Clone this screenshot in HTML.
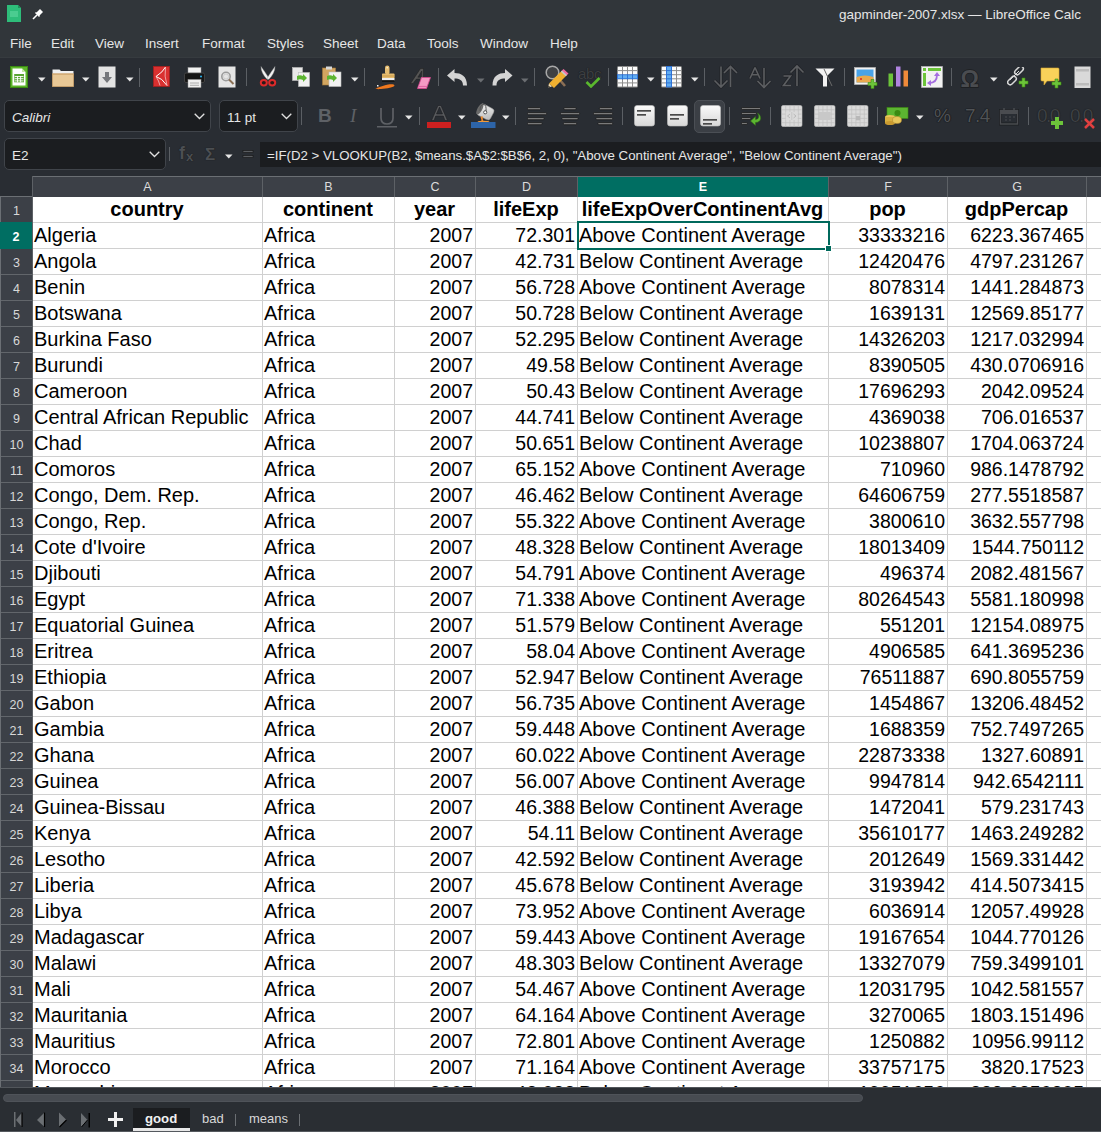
<!DOCTYPE html><html><head><meta charset="utf-8"><style>*{box-sizing:border-box}
html,body{margin:0;padding:0}
body{width:1101px;height:1132px;overflow:hidden;position:relative;background:#292d33;font-family:"Liberation Sans",sans-serif;color:#fff}
.abs{position:absolute}
#title{position:absolute;left:0;top:0;width:1101px;height:58px;background:#31363a;border-bottom:1px solid #363b3f}
#tbar{position:absolute;left:0;top:58px;width:1101px;height:118px;background:#292d33}
.ttl{position:absolute;top:5px;right:21px;font-size:15px;color:#e8e8e8;white-space:nowrap}
.menu{position:absolute;top:35px;font-size:14px;color:#eaeaea;white-space:nowrap}
.ch{position:absolute;top:177px;height:20px;background:#3c4047;color:#dcdcdc;font-size:12.5px;text-align:center;line-height:21px}
.ch.sel{background:#006e62;color:#fff;font-weight:bold}
.chv{position:absolute;top:177px;width:1px;height:20px;background:#5d6166}
#chtop{position:absolute;left:32px;top:176px;width:1069px;height:1px;background:#6b6f74}
.rh{position:absolute;left:1px;width:31px;height:25px;background:#3c4047;color:#d8d8d8;font-size:12.5px;text-align:center;line-height:29px}
.rh.sel{background:#006e62;color:#fff;font-weight:bold;left:0;width:32px;height:27px;margin-top:-1px;line-height:31px;z-index:3}
.cell{position:absolute;height:25px;background:#fff;color:#000;font-size:20px;line-height:25px;white-space:nowrap;overflow:hidden;padding:0 2px 0 1px}
.cell.r{font-size:19.5px;padding-right:2px}
.cell.l{text-align:left}
.cell.r{text-align:right}
.cell.c{text-align:center}
.cell.b{font-weight:bold}
.hl{position:absolute;left:33px;width:1068px;height:1px;background:#d0d0d0}
.vl{position:absolute;top:197px;width:1px;height:900px;background:#d0d0d0}
.rhl{position:absolute;left:1px;width:31px;height:1px;background:#62666b}
#selbox{position:absolute;left:577px;top:221px;width:253px;height:29px;border:2px solid #00695c}
#handle{position:absolute;left:825px;top:245px;width:7px;height:7px;background:#00695c;border:1px solid #fff}
#bottom{position:absolute;left:0;top:1087px;width:1101px;height:45px;background:#2a2e33}
</style></head><body>
<div id="title"></div><div id="tbar"></div>
<svg class="abs" style="left:7px;top:5px" width="15" height="18" viewBox="0 0 15 18"><path d="M0 0H11L14 3V17H0Z" fill="#2ebd7a"/><path d="M11 0L14 3H11Z" fill="#1f8f5a"/><rect x="3" y="6" width="8" height="6" fill="#5fd59f" opacity="0.6"/></svg>
<svg class="abs" style="left:32px;top:7px" width="13" height="13" viewBox="0 0 13 13"><path d="M1 12L5 8" stroke="#fff" stroke-width="1.6"/><path d="M4 6L7 9L11 5L8 2Z" fill="#fff"/><path d="M3.5 5.5L7.5 9.5" stroke="#fff" stroke-width="1.5"/></svg>
<div class="abs" style="top:6px;left:839px;font-size:13.5px;color:#e6e6e6;white-space:nowrap;line-height:18px">gapminder-2007.xlsx — LibreOffice Calc</div>
<div class="abs" style="top:35px;left:10px;font-size:13.5px;color:#e6e6e6;white-space:nowrap;line-height:18px">File</div>
<div class="abs" style="top:35px;left:51px;font-size:13.5px;color:#e6e6e6;white-space:nowrap;line-height:18px">Edit</div>
<div class="abs" style="top:35px;left:95px;font-size:13.5px;color:#e6e6e6;white-space:nowrap;line-height:18px">View</div>
<div class="abs" style="top:35px;left:145px;font-size:13.5px;color:#e6e6e6;white-space:nowrap;line-height:18px">Insert</div>
<div class="abs" style="top:35px;left:202px;font-size:13.5px;color:#e6e6e6;white-space:nowrap;line-height:18px">Format</div>
<div class="abs" style="top:35px;left:267px;font-size:13.5px;color:#e6e6e6;white-space:nowrap;line-height:18px">Styles</div>
<div class="abs" style="top:35px;left:323px;font-size:13.5px;color:#e6e6e6;white-space:nowrap;line-height:18px">Sheet</div>
<div class="abs" style="top:35px;left:377px;font-size:13.5px;color:#e6e6e6;white-space:nowrap;line-height:18px">Data</div>
<div class="abs" style="top:35px;left:427px;font-size:13.5px;color:#e6e6e6;white-space:nowrap;line-height:18px">Tools</div>
<div class="abs" style="top:35px;left:480px;font-size:13.5px;color:#e6e6e6;white-space:nowrap;line-height:18px">Window</div>
<div class="abs" style="top:35px;left:550px;font-size:13.5px;color:#e6e6e6;white-space:nowrap;line-height:18px">Help</div>
<svg class="abs" style="left:10px;top:66px" width="18" height="22" viewBox="0 0 18 22"><rect x="0.5" y="0.5" width="17" height="21" fill="#5db52a" stroke="#3a8a12"/><path d="M2.5 2.5H12L15.5 6V19.5H2.5Z" fill="#fff"/><path d="M12 2.5V6H15.5" fill="#c5e6a5"/><rect x="4.2" y="8" width="9.8" height="8.3" fill="#5aa532"/><path d="M4.7 10.5H13.5M4.7 12.7H13.5M4.7 14.9H13.5M7.5 10V16.3M10.6 10V16.3" stroke="#fff" stroke-width="0.9"/></svg>
<svg class="abs" style="left:38px;top:77px" width="8" height="5" viewBox="0 0 8 5"><path d="M0 0.5H7.5L3.75 4.5Z" fill="#e6e6e6"/></svg>
<svg class="abs" style="left:52px;top:68px" width="23" height="19" viewBox="0 0 23 19"><path d="M0.5 1.5H7.5L9 3H21.5V18.5H0.5Z" fill="#f0f0f0"/><rect x="0.5" y="6" width="21" height="12.5" fill="#e8c896"/><path d="M0.5 6H21.5" stroke="#d9b07a"/><rect x="0.5" y="6" width="21" height="12.5" fill="none" stroke="#c49a62" stroke-width="0.8"/></svg>
<svg class="abs" style="left:82px;top:77px" width="8" height="5" viewBox="0 0 8 5"><path d="M0 0.5H7.5L3.75 4.5Z" fill="#e6e6e6"/></svg>
<svg class="abs" style="left:98px;top:66px" width="18" height="22" viewBox="0 0 18 22"><rect x="0.5" y="0.5" width="17" height="21" fill="#e3e3e3"/><path d="M7 6H11V11H14L9 17L4 11H7Z" fill="#75777b"/></svg>
<svg class="abs" style="left:126px;top:77px" width="8" height="5" viewBox="0 0 8 5"><path d="M0 0.5H7.5L3.75 4.5Z" fill="#e6e6e6"/></svg>
<div class="abs" style="left:139px;top:68px;width:1px;height:19px;background:#5b5f64"></div>
<svg class="abs" style="left:153px;top:66px" width="17" height="21" viewBox="0 0 17 21"><rect x="0.4" y="0.4" width="16" height="20" fill="#d93030" stroke="#a81e1e" stroke-width="0.8"/><path d="M12.5 1Q10 6 3 10.5Q9 12 14 19.5" stroke="#fff" stroke-width="1" fill="none"/><path d="M12.5 1Q11 10 14 19.5" stroke="#f4c0c0" stroke-width="0.8" fill="none"/><path d="M3 10.5Q6 15 7 19.5" stroke="#f4c0c0" stroke-width="0.8" fill="none"/></svg>
<svg class="abs" style="left:184px;top:67px" width="21" height="21" viewBox="0 0 21 21"><rect x="4" y="0.5" width="13" height="7" fill="#f2f2f2" stroke="#999" stroke-width="0.5"/><rect x="0.5" y="6" width="20" height="9.5" rx="1.5" fill="#161616" stroke="#4a4a4a" stroke-width="0.8"/><circle cx="17" cy="9.5" r="1" fill="#29b6f6"/><rect x="4" y="12.5" width="13" height="8" fill="#f0f0f0" stroke="#999" stroke-width="0.5"/><path d="M6 16H15M6 18.3H15" stroke="#9a9a9a" stroke-width="0.8"/></svg>
<svg class="abs" style="left:218px;top:66px" width="19" height="22" viewBox="0 0 19 22"><rect x="0.5" y="0.5" width="17" height="21" fill="#e5e5e5"/><circle cx="8" cy="10.5" r="4.2" fill="none" stroke="#9b9b9b" stroke-width="1.6"/><circle cx="8" cy="10.5" r="2.5" fill="none" stroke="#c8c8c8" stroke-width="0.8"/><path d="M11 13.5L15.5 18" stroke="#8a7055" stroke-width="2"/></svg>
<div class="abs" style="left:246px;top:68px;width:1px;height:18px;background:#5b5f64"></div>
<svg class="abs" style="left:259px;top:66px" width="18" height="21" viewBox="0 0 18 21"><path d="M2 0.5Q2 7 8.2 13.5L10 12.3Q6 6 2 0.5Z" fill="#f2f2f2" stroke="#9a9a9a" stroke-width="0.4"/><path d="M16 0.5Q16 7 9.8 13.5L8 12.3Q12 6 16 0.5Z" fill="#f2f2f2" stroke="#9a9a9a" stroke-width="0.4"/><ellipse cx="4.8" cy="16.8" rx="3" ry="2.7" fill="#2a1a1a" stroke="#dd2a2a" stroke-width="2"/><ellipse cx="13.2" cy="16.8" rx="3" ry="2.7" fill="#2a1a1a" stroke="#dd2a2a" stroke-width="2"/></svg>
<svg class="abs" style="left:292px;top:67px" width="18" height="20" viewBox="0 0 18 20"><rect x="0.5" y="0.5" width="10" height="13" fill="#e8e8e8" stroke="#bdbdbd" stroke-width="0.6"/><rect x="6.5" y="5.5" width="11" height="14" fill="#f2f2f2" stroke="#bdbdbd" stroke-width="0.6"/><path d="M5 9C7 8 9 8 11 9V7L15 11L11 15V13C9 12 7 12 5 13Z" fill="#5cb531"/></svg>
<svg class="abs" style="left:322px;top:66px" width="20" height="21" viewBox="0 0 20 21"><rect x="0.5" y="2" width="13" height="17" fill="#d2a560" stroke="#a87a3a" stroke-width="0.6"/><rect x="4" y="0.5" width="6" height="3" fill="#d8d8d8"/><rect x="7" y="6" width="12" height="14.5" fill="#f2f2f2" stroke="#bdbdbd" stroke-width="0.6"/><path d="M5 10C7 9 9 9 11 10V8L15 12L11 16V14C9 13 7 13 5 14Z" fill="#5cb531"/></svg>
<svg class="abs" style="left:351px;top:77px" width="8" height="5" viewBox="0 0 8 5"><path d="M0 0.5H7.5L3.75 4.5Z" fill="#e6e6e6"/></svg>
<div class="abs" style="left:364px;top:68px;width:1px;height:18px;background:#5b5f64"></div>
<svg class="abs" style="left:375px;top:65px" width="21" height="25" viewBox="0 0 21 25"><rect x="10" y="0.5" width="4.5" height="9" rx="2.2" fill="#e6bd72"/><circle cx="12.2" cy="2.7" r="0.8" fill="#fff6d8"/><rect x="7" y="8.5" width="12.5" height="5" rx="0.8" fill="#e5bb6e"/><rect x="7" y="10.5" width="12.5" height="1" fill="#c99a48"/><rect x="7" y="13" width="12.5" height="2.5" fill="#eeeeee"/><rect x="7" y="15.2" width="12.5" height="1.8" fill="#161616"/><path d="M0.5 23.5C5 22 9 20 13 19.5C16 19 19.5 19 19.5 20.5C19 22.5 12 23.5 6 24C3 24.3 1 24.2 0.5 23.5Z" fill="#f0781e"/><rect x="2" y="20" width="1.5" height="1.5" fill="#f5f5f5"/></svg>
<svg class="abs" style="left:410px;top:68px" width="22" height="22" viewBox="0 0 22 22"><path d="M0.5 15.5L10.5 0.5H13.5L13 15.5H11L11.2 11H6.5L3 15.5ZM7.8 9.2H11.3L11.8 3Z" fill="#555" stroke="#1e1e1e" stroke-width="0.5"/><path d="M11.5 9.5L20.5 9.5L16.5 20.5H7.5Z" fill="#f49ac4" stroke="#d6458e" stroke-width="0.8"/><path d="M8 18.5H17" stroke="#e066a6" stroke-width="1.2"/></svg>
<div class="abs" style="left:438px;top:68px;width:1px;height:18px;background:#5b5f64"></div>
<svg class="abs" style="left:447px;top:69px" width="21" height="17" viewBox="0 0 21 17"><path d="M0 6.5L7.5 0V4C14 4 20 7 20 16.5H16C16 11 12 9.5 7.5 9.5V13Z" fill="#d4d4d4"/></svg>
<svg class="abs" style="left:477px;top:78px" width="8" height="5" viewBox="0 0 8 5"><path d="M0 0.5H7.5L3.75 4.5Z" fill="#6b6e72"/></svg>
<svg class="abs" style="left:492px;top:69px" width="21" height="17" viewBox="0 0 21 17"><path d="M20.5 6.5L13 0V4C6.5 4 0.5 7 0.5 16.5H4.5C4.5 11 8.5 9.5 13 9.5V13Z" fill="#d4d4d4"/></svg>
<svg class="abs" style="left:521px;top:78px" width="8" height="5" viewBox="0 0 8 5"><path d="M0 0.5H7.5L3.75 4.5Z" fill="#6b6e72"/></svg>
<div class="abs" style="left:534px;top:68px;width:1px;height:18px;background:#5b5f64"></div>
<svg class="abs" style="left:545px;top:65px" width="25" height="24" viewBox="0 0 25 24"><circle cx="7.5" cy="7.5" r="6.3" fill="#3e4043" stroke="#a8a8a8" stroke-width="1.5"/><path d="M14 14L20 21" stroke="#8a6e55" stroke-width="2.6"/><path d="M4 21.5L16.5 9L21.5 13.5L9 26Z" fill="#f0b030" transform="translate(0,-3)"/><path d="M16.5 6L18.5 4L23.5 8.5L21.5 10.5Z" fill="#f06aa0"/><path d="M15.8 6.7L17 5.5L22 10L20.8 11.2Z" fill="#c8c8c8"/><path d="M4 18.5L3 22.5L7 21.5Z" fill="#f5deb3"/><path d="M3 22.5L3.6 20.5L5 21.9Z" fill="#222"/></svg>
<div class="abs" style="left:578px;top:66px;font-size:15px;color:#3d3f42;line-height:16px;letter-spacing:-0.3px;text-shadow:0 0 1px #111">abc</div>
<svg class="abs" style="left:585px;top:77px" width="16" height="11" viewBox="0 0 16 11"><path d="M1.5 5L6 9.5L14.5 1" stroke="#5ab82e" stroke-width="2.6" fill="none"/></svg>
<div class="abs" style="left:608px;top:68px;width:1px;height:18px;background:#5b5f64"></div>
<svg class="abs" style="left:617px;top:66px" width="21" height="22" viewBox="0 0 21 22"><rect x="0" y="0" width="21" height="21.5" rx="1.5" fill="#8c8c8c"/><rect x="0" y="8.2" width="6" height="5.1" fill="#2f72d6"/><rect x="5" y="8.2" width="6" height="5.1" fill="#2f72d6"/><rect x="10" y="8.2" width="6" height="5.1" fill="#2f72d6"/><rect x="15" y="8.2" width="6" height="5.1" fill="#2f72d6"/><rect x="1" y="1.0" width="4" height="3.1" fill="#fbfbfb"/><rect x="1" y="5.1" width="4" height="3.1" fill="#fbfbfb"/><rect x="1" y="9.2" width="4" height="3.1" fill="#62aef2"/><rect x="1" y="13.299999999999999" width="4" height="3.1" fill="#fbfbfb"/><rect x="1" y="17.4" width="4" height="3.1" fill="#fbfbfb"/><rect x="6" y="1.0" width="4" height="3.1" fill="#fbfbfb"/><rect x="6" y="5.1" width="4" height="3.1" fill="#fbfbfb"/><rect x="6" y="9.2" width="4" height="3.1" fill="#62aef2"/><rect x="6" y="13.299999999999999" width="4" height="3.1" fill="#fbfbfb"/><rect x="6" y="17.4" width="4" height="3.1" fill="#fbfbfb"/><rect x="11" y="1.0" width="4" height="3.1" fill="#fbfbfb"/><rect x="11" y="5.1" width="4" height="3.1" fill="#fbfbfb"/><rect x="11" y="9.2" width="4" height="3.1" fill="#62aef2"/><rect x="11" y="13.299999999999999" width="4" height="3.1" fill="#fbfbfb"/><rect x="11" y="17.4" width="4" height="3.1" fill="#fbfbfb"/><rect x="16" y="1.0" width="4" height="3.1" fill="#fbfbfb"/><rect x="16" y="5.1" width="4" height="3.1" fill="#fbfbfb"/><rect x="16" y="9.2" width="4" height="3.1" fill="#62aef2"/><rect x="16" y="13.299999999999999" width="4" height="3.1" fill="#fbfbfb"/><rect x="16" y="17.4" width="4" height="3.1" fill="#fbfbfb"/></svg>
<svg class="abs" style="left:647px;top:77px" width="8" height="5" viewBox="0 0 8 5"><path d="M0 0.5H7.5L3.75 4.5Z" fill="#e6e6e6"/></svg>
<svg class="abs" style="left:661px;top:66px" width="21" height="22" viewBox="0 0 21 22"><rect x="0" y="0" width="21" height="21.5" rx="1.5" fill="#8c8c8c"/><rect x="5" y="0.0" width="6" height="5.1" fill="#2f72d6"/><rect x="5" y="4.1" width="6" height="5.1" fill="#2f72d6"/><rect x="5" y="8.2" width="6" height="5.1" fill="#2f72d6"/><rect x="5" y="12.299999999999999" width="6" height="5.1" fill="#2f72d6"/><rect x="5" y="16.4" width="6" height="5.1" fill="#2f72d6"/><rect x="1" y="1.0" width="4" height="3.1" fill="#fbfbfb"/><rect x="1" y="5.1" width="4" height="3.1" fill="#fbfbfb"/><rect x="1" y="9.2" width="4" height="3.1" fill="#fbfbfb"/><rect x="1" y="13.299999999999999" width="4" height="3.1" fill="#fbfbfb"/><rect x="1" y="17.4" width="4" height="3.1" fill="#fbfbfb"/><rect x="6" y="1.0" width="4" height="3.1" fill="#62aef2"/><rect x="6" y="5.1" width="4" height="3.1" fill="#62aef2"/><rect x="6" y="9.2" width="4" height="3.1" fill="#62aef2"/><rect x="6" y="13.299999999999999" width="4" height="3.1" fill="#62aef2"/><rect x="6" y="17.4" width="4" height="3.1" fill="#62aef2"/><rect x="11" y="1.0" width="4" height="3.1" fill="#fbfbfb"/><rect x="11" y="5.1" width="4" height="3.1" fill="#fbfbfb"/><rect x="11" y="9.2" width="4" height="3.1" fill="#fbfbfb"/><rect x="11" y="13.299999999999999" width="4" height="3.1" fill="#fbfbfb"/><rect x="11" y="17.4" width="4" height="3.1" fill="#fbfbfb"/><rect x="16" y="1.0" width="4" height="3.1" fill="#fbfbfb"/><rect x="16" y="5.1" width="4" height="3.1" fill="#fbfbfb"/><rect x="16" y="9.2" width="4" height="3.1" fill="#fbfbfb"/><rect x="16" y="13.299999999999999" width="4" height="3.1" fill="#fbfbfb"/><rect x="16" y="17.4" width="4" height="3.1" fill="#fbfbfb"/></svg>
<svg class="abs" style="left:691px;top:77px" width="8" height="5" viewBox="0 0 8 5"><path d="M0 0.5H7.5L3.75 4.5Z" fill="#e6e6e6"/></svg>
<div class="abs" style="left:704px;top:68px;width:1px;height:18px;background:#5b5f64"></div>
<svg class="abs" style="left:712px;top:65px" width="28" height="24" viewBox="0 0 28 24"><g stroke="#1c1d20" stroke-width="3" fill="none" opacity="0.6"><path d="M9 1.5V22M2.5 15.5L9 22L15.5 15.5M18.5 22V1.5M12 8L18.5 1.5L25 8"/></g><g stroke="#5c5e61" stroke-width="1.6" fill="none"><path d="M9 1.5V22M2.5 15.5L9 22L15.5 15.5M18.5 22V1.5M12 8L18.5 1.5L25 8"/></g></svg>
<svg class="abs" style="left:748px;top:66px" width="24" height="24" viewBox="0 0 24 24"><g stroke="#1c1d20" stroke-width="3" fill="none" opacity="0.6"><path d="M2 12.5L6.8 2H7.2L12 12.5M4 8.8H10"/></g><path d="M2 12.5L6.8 2H7.2L12 12.5M4 8.8H10" stroke="#5c5e61" stroke-width="1.6" fill="none"/><g stroke="#1c1d20" stroke-width="3" fill="none" opacity="0.6"><path d="M16 2V21.5M9.5 15L16 21.5L22.5 15"/></g><path d="M16 2V21.5M9.5 15L16 21.5L22.5 15" stroke="#5c5e61" stroke-width="1.6" fill="none"/></svg>
<svg class="abs" style="left:781px;top:64px" width="24" height="24" viewBox="0 0 24 24"><g stroke="#1c1d20" stroke-width="3" fill="none" opacity="0.6"><path d="M2.5 12H9.5L2.5 21.5H10"/></g><path d="M2.5 12H9.5L2.5 21.5H10" stroke="#5c5e61" stroke-width="1.6" fill="none"/><g stroke="#1c1d20" stroke-width="3" fill="none" opacity="0.6"><path d="M16 22V2M9.5 8.5L16 2L22.5 8.5"/></g><path d="M16 22V2M9.5 8.5L16 2L22.5 8.5" stroke="#5c5e61" stroke-width="1.6" fill="none"/></svg>
<svg class="abs" style="left:815px;top:68px" width="20" height="19" viewBox="0 0 20 19"><path d="M0.5 0.5H19.5L12 8V18.5H8V8Z" fill="#f2f2f2"/><path d="M9 1L17 18" stroke="#6a6a6a" stroke-width="1"/></svg>
<div class="abs" style="left:844px;top:68px;width:1px;height:18px;background:#5b5f64"></div>
<svg class="abs" style="left:854px;top:67px" width="25" height="22" viewBox="0 0 25 22"><rect x="0.5" y="0.5" width="21" height="17" fill="#f2f2f2" stroke="#bbb" stroke-width="0.6"/><rect x="2.5" y="2.5" width="17" height="13" fill="#4aa3e8"/><path d="M2.5 10C8 8 14 8 19.5 10V15.5H2.5Z" fill="#e9a94e"/><circle cx="7" cy="12" r="1" fill="#d22"/><path d="M14 15.5H17V12.5H20V15.5H23V18.5H20V21.5H17V18.5H14Z" fill="#6cc43a" stroke="#3c8a12" stroke-width="0.6"/></svg>
<svg class="abs" style="left:888px;top:66px" width="21" height="21" viewBox="0 0 21 21"><rect x="0.5" y="7.5" width="4.5" height="13" fill="#6cc43a"/><rect x="8" y="0.5" width="4.5" height="20" fill="#b084e0"/><rect x="15.5" y="4.5" width="4.5" height="16" fill="#f08a3a"/></svg>
<svg class="abs" style="left:921px;top:66px" width="22" height="22" viewBox="0 0 22 22"><rect x="0.5" y="0.5" width="21" height="21" fill="#f2f2f2" stroke="#bbb" stroke-width="0.6"/><rect x="2" y="2" width="3" height="3" fill="#6cc43a"/><rect x="7" y="2" width="13" height="3" fill="#6cc43a"/><rect x="2" y="7" width="3" height="13" fill="#6cc43a"/><path d="M8 17C14 17 16 14 16 9" stroke="#a46ee0" stroke-width="1.8" fill="none"/><path d="M13 10L16 6L19 10Z M10 14V20L6 17Z" fill="#a46ee0"/></svg>
<div class="abs" style="left:951px;top:68px;width:1px;height:18px;background:#5b5f64"></div>
<svg class="abs" style="left:960px;top:68px" width="23" height="20" viewBox="0 0 23 20"><text x="0.5" y="18.5" font-family="Liberation Sans" font-weight="bold" font-size="23" fill="#4a4c50" stroke="#1c1d20" stroke-width="1.4" paint-order="stroke">Ω</text></svg>
<svg class="abs" style="left:990px;top:77px" width="8" height="5" viewBox="0 0 8 5"><path d="M0 0.5H7.5L3.75 4.5Z" fill="#e6e6e6"/></svg>
<svg class="abs" style="left:1007px;top:67px" width="22" height="21" viewBox="0 0 22 21"><path d="M3 13L12 4" stroke="#ddd" stroke-width="1"/><rect x="7" y="1" width="10" height="5" rx="2.5" transform="rotate(-45 12 3.5)" fill="none" stroke="#d8d8d8" stroke-width="1.5"/><rect x="0" y="11" width="10" height="5" rx="2.5" transform="rotate(-45 5 13.5)" fill="none" stroke="#d8d8d8" stroke-width="1.5"/><path d="M12 14H15V11H18V14H21V17H18V20H15V17H12Z" fill="#6cc43a" stroke="#3c8a12" stroke-width="0.6"/></svg>
<svg class="abs" style="left:1040px;top:67px" width="22" height="22" viewBox="0 0 22 22"><path d="M1 1H18Q19 1 19 2V13Q19 14 18 14H7L4 18V14H2Q1 14 1 13Z" fill="#f9d25a" stroke="#d8a830" stroke-width="0.6"/><path d="M12 15H15V12H18V15H21V18H18V21H15V18H12Z" fill="#6cc43a" stroke="#3c8a12" stroke-width="0.6"/></svg>
<svg class="abs" style="left:1074px;top:66px" width="18" height="23" viewBox="0 0 18 23"><rect x="0.5" y="0.5" width="16" height="21.5" fill="#d9d9d9"/><rect x="2" y="3" width="13" height="2.5" fill="#bcbcbc"/><rect x="2" y="17" width="13" height="2.5" fill="#bcbcbc"/></svg>
<div class="abs" style="left:4px;top:100px;width:207px;height:32px;background:#1b1d20;border:1px solid #40444a;border-radius:5px"></div>
<div class="abs" style="left:12px;top:109.0px;font-size:13.5px;font-style:italic;color:#e6e6e6;line-height:18px;white-space:nowrap">Calibri</div>
<svg class="abs" style="left:194px;top:113px" width="11" height="7" viewBox="0 0 11 7"><path d="M0.7 0.7L5.5 5.5L10.3 0.7" stroke="#e0e0e0" stroke-width="1.3" fill="none"/></svg>
<div class="abs" style="left:219px;top:100px;width:79px;height:32px;background:#1b1d20;border:1px solid #40444a;border-radius:5px"></div>
<div class="abs" style="left:227px;top:109.0px;font-size:13.5px;color:#e6e6e6;line-height:18px;white-space:nowrap">11 pt</div>
<svg class="abs" style="left:281px;top:113px" width="11" height="7" viewBox="0 0 11 7"><path d="M0.7 0.7L5.5 5.5L10.3 0.7" stroke="#e0e0e0" stroke-width="1.3" fill="none"/></svg>
<div class="abs" style="left:301px;top:107px;width:1px;height:18px;background:#5b5f64"></div>
<div class="abs" style="left:318px;top:106px;font-size:19px;font-weight:bold;color:#5e6166;line-height:20px">B</div>
<div class="abs" style="left:350px;top:106px;font-size:19px;font-style:italic;color:#5e6166;line-height:20px;font-family:'Liberation Serif'">I</div>
<svg class="abs" style="left:377px;top:107px" width="21" height="21" viewBox="0 0 21 21"><path d="M4 1V11Q4 17 10 17Q16 17 16 11V1" stroke="#5e6166" stroke-width="1.7" fill="none"/><rect x="0" y="19" width="20" height="1.5" fill="#5e6166"/></svg>
<svg class="abs" style="left:405px;top:115px" width="8" height="5" viewBox="0 0 8 5"><path d="M0 0.5H7.5L3.75 4.5Z" fill="#e6e6e6"/></svg>
<div class="abs" style="left:419px;top:107px;width:1px;height:18px;background:#5b5f64"></div>
<svg class="abs" style="left:427px;top:104px" width="25" height="25" viewBox="0 0 25 25"><path d="M4.5 16.5L11 1.5H14L20.5 16.5H18L16.3 12H8.7L7 16.5ZM9.5 10H15.5L12.5 3Z" fill="#595b5e" stroke="#1e1f22" stroke-width="0.6"/><rect x="0" y="18" width="24" height="6" fill="#cc2020"/></svg>
<svg class="abs" style="left:458px;top:115px" width="8" height="5" viewBox="0 0 8 5"><path d="M0 0.5H7.5L3.75 4.5Z" fill="#e6e6e6"/></svg>
<svg class="abs" style="left:471px;top:103px" width="25" height="26" viewBox="0 0 25 26"><defs><linearGradient id="bk" x1="0" y1="0" x2="1" y2="1"><stop offset="0" stop-color="#f4f4f4"/><stop offset="1" stop-color="#b8b8b8"/></linearGradient></defs><g transform="rotate(28 15 9)"><rect x="7" y="3" width="15" height="12.5" rx="3" fill="url(#bk)" stroke="#888" stroke-width="0.5"/><ellipse cx="8.2" cy="9.2" rx="2.4" ry="6" fill="#6a6a6a"/></g><path d="M9 8Q9 1 13 1.5Q15.5 2 15 8" stroke="#555" stroke-width="1" fill="none"/><circle cx="14.2" cy="9.3" r="1.6" fill="#fff" stroke="#444" stroke-width="0.9"/><path d="M9.5 14Q11 17 10 19H13Q11.5 17 11.5 13Z" fill="#f08a2a"/><ellipse cx="12.5" cy="18.6" rx="6" ry="0.9" fill="#f09a3a"/><rect x="0" y="19" width="24.5" height="6" fill="#2d64a8"/></svg>
<svg class="abs" style="left:502px;top:115px" width="8" height="5" viewBox="0 0 8 5"><path d="M0 0.5H7.5L3.75 4.5Z" fill="#e6e6e6"/></svg>
<div class="abs" style="left:515px;top:107px;width:1px;height:18px;background:#5b5f64"></div>
<svg class="abs" style="left:527px;top:107px" width="21" height="19" viewBox="0 0 21 19"><rect x="0.4" y="0.5" width="13.2" height="2.2" rx="1" fill="#7a7a7a" stroke="#151515" stroke-width="0.7"/><rect x="0.4" y="5.5" width="19.2" height="2.2" rx="1" fill="#7a7a7a" stroke="#151515" stroke-width="0.7"/><rect x="0.4" y="10.5" width="16.7" height="2.2" rx="1" fill="#7a7a7a" stroke="#151515" stroke-width="0.7"/><rect x="0.4" y="15.5" width="14.7" height="2.2" rx="1" fill="#7a7a7a" stroke="#151515" stroke-width="0.7"/></svg>
<svg class="abs" style="left:560px;top:107px" width="21" height="19" viewBox="0 0 21 19"><rect x="3.9" y="0.5" width="12.2" height="2.2" rx="1" fill="#7a7a7a" stroke="#151515" stroke-width="0.7"/><rect x="0.4" y="5.5" width="19.2" height="2.2" rx="1" fill="#7a7a7a" stroke="#151515" stroke-width="0.7"/><rect x="1.9" y="10.5" width="16.2" height="2.2" rx="1" fill="#7a7a7a" stroke="#151515" stroke-width="0.7"/><rect x="3.4" y="15.5" width="13.2" height="2.2" rx="1" fill="#7a7a7a" stroke="#151515" stroke-width="0.7"/></svg>
<svg class="abs" style="left:593px;top:107px" width="21" height="19" viewBox="0 0 21 19"><rect x="6.4" y="0.5" width="13.2" height="2.2" rx="1" fill="#7a7a7a" stroke="#151515" stroke-width="0.7"/><rect x="0.4" y="5.5" width="19.2" height="2.2" rx="1" fill="#7a7a7a" stroke="#151515" stroke-width="0.7"/><rect x="2.9" y="10.5" width="16.7" height="2.2" rx="1" fill="#7a7a7a" stroke="#151515" stroke-width="0.7"/><rect x="4.9" y="15.5" width="14.7" height="2.2" rx="1" fill="#7a7a7a" stroke="#151515" stroke-width="0.7"/></svg>
<div class="abs" style="left:622px;top:107px;width:1px;height:18px;background:#5b5f64"></div>
<div class="abs" style="left:694px;top:100px;width:31px;height:33px;background:#3b3f45;border:1px solid #4b4f55;border-radius:5px"></div>
<svg class="abs" style="left:634px;top:105px" width="21" height="22" viewBox="0 0 21 22"><defs><linearGradient id="vg" x1="0" y1="0" x2="0" y2="1"><stop offset="0" stop-color="#fafafa"/><stop offset="1" stop-color="#d8d8d8"/></linearGradient></defs><rect x="0.5" y="0.5" width="20" height="20.5" rx="2.5" fill="url(#vg)" stroke="#c0c0c0" stroke-width="0.6"/><rect x="3" y="5" width="14" height="1.7" fill="#4a4a4a"/><rect x="3" y="9" width="9" height="1.7" fill="#4a4a4a"/></svg>
<svg class="abs" style="left:667px;top:105px" width="21" height="22" viewBox="0 0 21 22"><defs><linearGradient id="vg" x1="0" y1="0" x2="0" y2="1"><stop offset="0" stop-color="#fafafa"/><stop offset="1" stop-color="#d8d8d8"/></linearGradient></defs><rect x="0.5" y="0.5" width="20" height="20.5" rx="2.5" fill="url(#vg)" stroke="#c0c0c0" stroke-width="0.6"/><rect x="3" y="9" width="14" height="1.7" fill="#4a4a4a"/><rect x="3" y="13" width="9" height="1.7" fill="#4a4a4a"/></svg>
<svg class="abs" style="left:700px;top:105px" width="21" height="22" viewBox="0 0 21 22"><defs><linearGradient id="vg" x1="0" y1="0" x2="0" y2="1"><stop offset="0" stop-color="#fafafa"/><stop offset="1" stop-color="#d8d8d8"/></linearGradient></defs><rect x="0.5" y="0.5" width="20" height="20.5" rx="2.5" fill="url(#vg)" stroke="#c0c0c0" stroke-width="0.6"/><rect x="3" y="14" width="14" height="1.7" fill="#4a4a4a"/><rect x="3" y="18" width="9" height="1.7" fill="#4a4a4a"/></svg>
<div class="abs" style="left:729px;top:107px;width:1px;height:18px;background:#5b5f64"></div>
<svg class="abs" style="left:741px;top:107px" width="21" height="19" viewBox="0 0 21 19"><rect x="0.4" y="0.5" width="19.2" height="2" rx="1" fill="#7a7a7a" stroke="#151515" stroke-width="0.7"/><rect x="0.4" y="5.5" width="15" height="2" rx="1" fill="#7a7a7a" stroke="#151515" stroke-width="0.7"/><rect x="0.4" y="10.5" width="9.5" height="2" rx="1" fill="#7a7a7a" stroke="#151515" stroke-width="0.7"/><rect x="0.4" y="15.5" width="6" height="2" rx="1" fill="#7a7a7a" stroke="#151515" stroke-width="0.7"/><path d="M16.5 6C21 8.5 21 15.5 14.5 15.5V18.5L9.5 14L14.5 9.5V12.5C18 12.5 18.5 9 16.5 6Z" fill="#5cb531" stroke="#2f6d12" stroke-width="0.5"/></svg>
<div class="abs" style="left:770px;top:107px;width:1px;height:18px;background:#5b5f64"></div>
<svg class="abs" style="left:781px;top:105px" width="22" height="22" viewBox="0 0 22 22"><rect x="0.5" y="0.5" width="20.5" height="21" rx="1.5" fill="#dadada" stroke="#c4c4c4" stroke-width="0.6"/><path d="M4.7 1V21.5" stroke="#bfbfbf" stroke-width="0.7"/><path d="M1 4.8H20.5" stroke="#bfbfbf" stroke-width="0.7"/><path d="M8.9 1V21.5" stroke="#bfbfbf" stroke-width="0.7"/><path d="M1 9.1H20.5" stroke="#bfbfbf" stroke-width="0.7"/><path d="M13.100000000000001 1V21.5" stroke="#bfbfbf" stroke-width="0.7"/><path d="M1 13.399999999999999H20.5" stroke="#bfbfbf" stroke-width="0.7"/><path d="M17.3 1V21.5" stroke="#bfbfbf" stroke-width="0.7"/><path d="M1 17.7H20.5" stroke="#bfbfbf" stroke-width="0.7"/><rect x="4.7" y="7" width="12" height="8" fill="#dadada"/><path d="M9 9L6.5 11L9 13M12.5 9L15 11L12.5 13" stroke="#b0b0b0" stroke-width="0.8" fill="none"/><path d="M10.8 7V15" stroke="#bfbfbf" stroke-width="0.7"/></svg>
<svg class="abs" style="left:814px;top:105px" width="22" height="22" viewBox="0 0 22 22"><rect x="0.5" y="0.5" width="20.5" height="21" rx="1.5" fill="#dadada" stroke="#c4c4c4" stroke-width="0.6"/><path d="M4.7 1V21.5" stroke="#bfbfbf" stroke-width="0.7"/><path d="M1 4.8H20.5" stroke="#bfbfbf" stroke-width="0.7"/><path d="M8.9 1V21.5" stroke="#bfbfbf" stroke-width="0.7"/><path d="M1 9.1H20.5" stroke="#bfbfbf" stroke-width="0.7"/><path d="M13.100000000000001 1V21.5" stroke="#bfbfbf" stroke-width="0.7"/><path d="M1 13.399999999999999H20.5" stroke="#bfbfbf" stroke-width="0.7"/><path d="M17.3 1V21.5" stroke="#bfbfbf" stroke-width="0.7"/><path d="M1 17.7H20.5" stroke="#bfbfbf" stroke-width="0.7"/><rect x="4.7" y="7" width="12" height="8" fill="#c8c8c8"/></svg>
<svg class="abs" style="left:847px;top:105px" width="22" height="22" viewBox="0 0 22 22"><rect x="0.5" y="0.5" width="20.5" height="21" rx="1.5" fill="#dadada" stroke="#c4c4c4" stroke-width="0.6"/><path d="M4.7 1V21.5" stroke="#bfbfbf" stroke-width="0.7"/><path d="M1 4.8H20.5" stroke="#bfbfbf" stroke-width="0.7"/><path d="M8.9 1V21.5" stroke="#bfbfbf" stroke-width="0.7"/><path d="M1 9.1H20.5" stroke="#bfbfbf" stroke-width="0.7"/><path d="M13.100000000000001 1V21.5" stroke="#bfbfbf" stroke-width="0.7"/><path d="M1 13.399999999999999H20.5" stroke="#bfbfbf" stroke-width="0.7"/><path d="M17.3 1V21.5" stroke="#bfbfbf" stroke-width="0.7"/><path d="M1 17.7H20.5" stroke="#bfbfbf" stroke-width="0.7"/><rect x="8.9" y="11" width="4.2" height="4.3" fill="#b8b8b8"/></svg>
<div class="abs" style="left:877px;top:107px;width:1px;height:18px;background:#5b5f64"></div>
<svg class="abs" style="left:884px;top:107px" width="25" height="18" viewBox="0 0 25 18"><rect x="3" y="0.5" width="21" height="11" fill="#5cb531" stroke="#3c8a12" stroke-width="0.6"/><circle cx="13.5" cy="6" r="3" fill="#3c8a12"/><ellipse cx="6" cy="10" rx="5" ry="2" fill="#e8c65a"/><rect x="1" y="10" width="10" height="6" fill="#d9b040"/><ellipse cx="6" cy="16" rx="5" ry="2" fill="#c99a30"/><ellipse cx="13" cy="13" rx="4.5" ry="3.5" fill="#e8c65a" stroke="#b08a30" stroke-width="0.6"/></svg>
<svg class="abs" style="left:916px;top:115px" width="8" height="5" viewBox="0 0 8 5"><path d="M0 0.5H7.5L3.75 4.5Z" fill="#e6e6e6"/></svg>
<div class="abs" style="left:934px;top:106px;font-size:19px;color:#505357;line-height:20px;text-shadow:0 0 1px #111,0 0 1px #111">%</div>
<div class="abs" style="left:965px;top:106px;font-size:19px;color:#505357;line-height:20px;letter-spacing:-0.5px;text-shadow:0 0 1px #111,0 0 1px #111">7.4</div>
<svg class="abs" style="left:999px;top:107px" width="21" height="19" viewBox="0 0 21 19"><g stroke="#141517" stroke-width="2.8" fill="none" opacity="0.7"><rect x="1.5" y="3.5" width="17" height="13.5"/></g><rect x="1.5" y="3.5" width="17" height="13.5" fill="none" stroke="#4a4c50" stroke-width="1.5"/><rect x="1.5" y="3.5" width="17" height="3.5" fill="#4a4c50"/><path d="M5 1V4M15 1V4" stroke="#4a4c50" stroke-width="1.5"/><path d="M6 10H8M10 10H12M14 10H16M6 13H8M10 13H12" stroke="#4a4c50" stroke-width="1.2"/></svg>
<div class="abs" style="left:1028px;top:107px;width:1px;height:18px;background:#5b5f64"></div>
<div class="abs" style="left:1037px;top:106px;font-size:19px;color:#3e4145;line-height:20px;letter-spacing:-1.5px;text-shadow:0 0 1px #111">0.0</div>
<svg class="abs" style="left:1051px;top:117px" width="12" height="12" viewBox="0 0 12 12"><path d="M4 0H8V4H12V8H8V12H4V8H0V4H4Z" fill="#6cc43a"/></svg>
<div class="abs" style="left:1070px;top:106px;font-size:19px;color:#3e4145;line-height:20px;letter-spacing:-1.5px;text-shadow:0 0 1px #111">0.0</div>
<svg class="abs" style="left:1084px;top:118px" width="11" height="11" viewBox="0 0 11 11"><path d="M1 1L10 10M10 1L1 10" stroke="#e04040" stroke-width="2.5"/></svg>
<div class="abs" style="left:4px;top:138px;width:162px;height:32px;background:#1b1d20;border:1px solid #40444a;border-radius:5px"></div>
<div class="abs" style="left:12px;top:147px;font-size:13.5px;color:#e6e6e6;line-height:18px">E2</div>
<svg class="abs" style="left:149px;top:151px" width="11" height="7" viewBox="0 0 11 7"><path d="M0.7 0.7L5.5 5.5L10.3 0.7" stroke="#e0e0e0" stroke-width="1.3" fill="none"/></svg>
<div class="abs" style="left:169px;top:147px;width:1px;height:14px;background:#5b5f64"></div>
<div class="abs" style="left:179px;top:143px;font-size:18px;color:#4c4f53;line-height:20px;font-weight:bold;text-shadow:0 0 1px #111">f<span style="font-size:13px;position:relative;top:2px;left:1px">x</span></div>
<div class="abs" style="left:205px;top:145px;font-size:17px;font-weight:bold;color:#4c4f53;line-height:20px;text-shadow:0 0 1px #111">Σ</div>
<svg class="abs" style="left:225px;top:154px" width="8" height="5" viewBox="0 0 8 5"><path d="M0 0.5H7.5L3.75 4.5Z" fill="#e6e6e6"/></svg>
<svg class="abs" style="left:242px;top:149px" width="12" height="10" viewBox="0 0 12 10"><rect x="1" y="1.5" width="10" height="2" fill="#5a5d61" stroke="#151515" stroke-width="0.6"/><rect x="1" y="6.5" width="10" height="2" fill="#5a5d61" stroke="#151515" stroke-width="0.6"/></svg>
<div class="abs" style="left:260px;top:142px;width:841px;height:25px;background:#1b1d20"></div>
<div class="abs" style="left:267px;top:146.5px;font-size:13.25px;color:#e6e6e6;line-height:18px;white-space:nowrap">=IF(D2 &gt; VLOOKUP(B2, $means.$A$2:$B$6, 2, 0), "Above Continent Average", "Below Continent Average")</div>
<div id="grid">
<div class="ch" style="left:33px;width:229px">A</div>
<div class="ch" style="left:263px;width:131px">B</div>
<div class="ch" style="left:395px;width:80px">C</div>
<div class="ch" style="left:476px;width:101px">D</div>
<div class="ch sel" style="left:578px;width:250px">E</div>
<div class="ch" style="left:829px;width:118px">F</div>
<div class="ch" style="left:948px;width:138px">G</div>
<div class="ch" style="left:1087px;width:113px"></div>
<div class="chv" style="left:262px"></div>
<div class="chv" style="left:394px"></div>
<div class="chv" style="left:475px"></div>
<div class="chv" style="left:577px"></div>
<div class="chv" style="left:828px"></div>
<div class="chv" style="left:947px"></div>
<div class="chv" style="left:1086px"></div>
<div class="chv" style="left:1200px"></div>
<div class="rh" style="top:197px">1</div>
<div class="cell c b" style="top:197px;left:33px;width:229px">country</div>
<div class="cell c b" style="top:197px;left:263px;width:131px">continent</div>
<div class="cell c b" style="top:197px;left:395px;width:80px">year</div>
<div class="cell c b" style="top:197px;left:476px;width:101px">lifeExp</div>
<div class="cell c b" style="top:197px;left:578px;width:250px">lifeExpOverContinentAvg</div>
<div class="cell c b" style="top:197px;left:829px;width:118px">pop</div>
<div class="cell c b" style="top:197px;left:948px;width:138px">gdpPercap</div>
<div class="cell" style="top:197px;left:1087px;width:20px"></div>
<div class="rh sel" style="top:223px">2</div>
<div class="cell l" style="top:223px;left:33px;width:229px">Algeria</div>
<div class="cell l" style="top:223px;left:263px;width:131px">Africa</div>
<div class="cell r" style="top:223px;left:395px;width:80px">2007</div>
<div class="cell r" style="top:223px;left:476px;width:101px">72.301</div>
<div class="cell l" style="top:223px;left:578px;width:250px">Above Continent Average</div>
<div class="cell r" style="top:223px;left:829px;width:118px">33333216</div>
<div class="cell r" style="top:223px;left:948px;width:138px">6223.367465</div>
<div class="cell" style="top:223px;left:1087px;width:20px"></div>
<div class="rh" style="top:249px">3</div>
<div class="cell l" style="top:249px;left:33px;width:229px">Angola</div>
<div class="cell l" style="top:249px;left:263px;width:131px">Africa</div>
<div class="cell r" style="top:249px;left:395px;width:80px">2007</div>
<div class="cell r" style="top:249px;left:476px;width:101px">42.731</div>
<div class="cell l" style="top:249px;left:578px;width:250px">Below Continent Average</div>
<div class="cell r" style="top:249px;left:829px;width:118px">12420476</div>
<div class="cell r" style="top:249px;left:948px;width:138px">4797.231267</div>
<div class="cell" style="top:249px;left:1087px;width:20px"></div>
<div class="rh" style="top:275px">4</div>
<div class="cell l" style="top:275px;left:33px;width:229px">Benin</div>
<div class="cell l" style="top:275px;left:263px;width:131px">Africa</div>
<div class="cell r" style="top:275px;left:395px;width:80px">2007</div>
<div class="cell r" style="top:275px;left:476px;width:101px">56.728</div>
<div class="cell l" style="top:275px;left:578px;width:250px">Above Continent Average</div>
<div class="cell r" style="top:275px;left:829px;width:118px">8078314</div>
<div class="cell r" style="top:275px;left:948px;width:138px">1441.284873</div>
<div class="cell" style="top:275px;left:1087px;width:20px"></div>
<div class="rh" style="top:301px">5</div>
<div class="cell l" style="top:301px;left:33px;width:229px">Botswana</div>
<div class="cell l" style="top:301px;left:263px;width:131px">Africa</div>
<div class="cell r" style="top:301px;left:395px;width:80px">2007</div>
<div class="cell r" style="top:301px;left:476px;width:101px">50.728</div>
<div class="cell l" style="top:301px;left:578px;width:250px">Below Continent Average</div>
<div class="cell r" style="top:301px;left:829px;width:118px">1639131</div>
<div class="cell r" style="top:301px;left:948px;width:138px">12569.85177</div>
<div class="cell" style="top:301px;left:1087px;width:20px"></div>
<div class="rh" style="top:327px">6</div>
<div class="cell l" style="top:327px;left:33px;width:229px">Burkina Faso</div>
<div class="cell l" style="top:327px;left:263px;width:131px">Africa</div>
<div class="cell r" style="top:327px;left:395px;width:80px">2007</div>
<div class="cell r" style="top:327px;left:476px;width:101px">52.295</div>
<div class="cell l" style="top:327px;left:578px;width:250px">Below Continent Average</div>
<div class="cell r" style="top:327px;left:829px;width:118px">14326203</div>
<div class="cell r" style="top:327px;left:948px;width:138px">1217.032994</div>
<div class="cell" style="top:327px;left:1087px;width:20px"></div>
<div class="rh" style="top:353px">7</div>
<div class="cell l" style="top:353px;left:33px;width:229px">Burundi</div>
<div class="cell l" style="top:353px;left:263px;width:131px">Africa</div>
<div class="cell r" style="top:353px;left:395px;width:80px">2007</div>
<div class="cell r" style="top:353px;left:476px;width:101px">49.58</div>
<div class="cell l" style="top:353px;left:578px;width:250px">Below Continent Average</div>
<div class="cell r" style="top:353px;left:829px;width:118px">8390505</div>
<div class="cell r" style="top:353px;left:948px;width:138px">430.0706916</div>
<div class="cell" style="top:353px;left:1087px;width:20px"></div>
<div class="rh" style="top:379px">8</div>
<div class="cell l" style="top:379px;left:33px;width:229px">Cameroon</div>
<div class="cell l" style="top:379px;left:263px;width:131px">Africa</div>
<div class="cell r" style="top:379px;left:395px;width:80px">2007</div>
<div class="cell r" style="top:379px;left:476px;width:101px">50.43</div>
<div class="cell l" style="top:379px;left:578px;width:250px">Below Continent Average</div>
<div class="cell r" style="top:379px;left:829px;width:118px">17696293</div>
<div class="cell r" style="top:379px;left:948px;width:138px">2042.09524</div>
<div class="cell" style="top:379px;left:1087px;width:20px"></div>
<div class="rh" style="top:405px">9</div>
<div class="cell l" style="top:405px;left:33px;width:229px">Central African Republic</div>
<div class="cell l" style="top:405px;left:263px;width:131px">Africa</div>
<div class="cell r" style="top:405px;left:395px;width:80px">2007</div>
<div class="cell r" style="top:405px;left:476px;width:101px">44.741</div>
<div class="cell l" style="top:405px;left:578px;width:250px">Below Continent Average</div>
<div class="cell r" style="top:405px;left:829px;width:118px">4369038</div>
<div class="cell r" style="top:405px;left:948px;width:138px">706.016537</div>
<div class="cell" style="top:405px;left:1087px;width:20px"></div>
<div class="rh" style="top:431px">10</div>
<div class="cell l" style="top:431px;left:33px;width:229px">Chad</div>
<div class="cell l" style="top:431px;left:263px;width:131px">Africa</div>
<div class="cell r" style="top:431px;left:395px;width:80px">2007</div>
<div class="cell r" style="top:431px;left:476px;width:101px">50.651</div>
<div class="cell l" style="top:431px;left:578px;width:250px">Below Continent Average</div>
<div class="cell r" style="top:431px;left:829px;width:118px">10238807</div>
<div class="cell r" style="top:431px;left:948px;width:138px">1704.063724</div>
<div class="cell" style="top:431px;left:1087px;width:20px"></div>
<div class="rh" style="top:457px">11</div>
<div class="cell l" style="top:457px;left:33px;width:229px">Comoros</div>
<div class="cell l" style="top:457px;left:263px;width:131px">Africa</div>
<div class="cell r" style="top:457px;left:395px;width:80px">2007</div>
<div class="cell r" style="top:457px;left:476px;width:101px">65.152</div>
<div class="cell l" style="top:457px;left:578px;width:250px">Above Continent Average</div>
<div class="cell r" style="top:457px;left:829px;width:118px">710960</div>
<div class="cell r" style="top:457px;left:948px;width:138px">986.1478792</div>
<div class="cell" style="top:457px;left:1087px;width:20px"></div>
<div class="rh" style="top:483px">12</div>
<div class="cell l" style="top:483px;left:33px;width:229px">Congo, Dem. Rep.</div>
<div class="cell l" style="top:483px;left:263px;width:131px">Africa</div>
<div class="cell r" style="top:483px;left:395px;width:80px">2007</div>
<div class="cell r" style="top:483px;left:476px;width:101px">46.462</div>
<div class="cell l" style="top:483px;left:578px;width:250px">Below Continent Average</div>
<div class="cell r" style="top:483px;left:829px;width:118px">64606759</div>
<div class="cell r" style="top:483px;left:948px;width:138px">277.5518587</div>
<div class="cell" style="top:483px;left:1087px;width:20px"></div>
<div class="rh" style="top:509px">13</div>
<div class="cell l" style="top:509px;left:33px;width:229px">Congo, Rep.</div>
<div class="cell l" style="top:509px;left:263px;width:131px">Africa</div>
<div class="cell r" style="top:509px;left:395px;width:80px">2007</div>
<div class="cell r" style="top:509px;left:476px;width:101px">55.322</div>
<div class="cell l" style="top:509px;left:578px;width:250px">Above Continent Average</div>
<div class="cell r" style="top:509px;left:829px;width:118px">3800610</div>
<div class="cell r" style="top:509px;left:948px;width:138px">3632.557798</div>
<div class="cell" style="top:509px;left:1087px;width:20px"></div>
<div class="rh" style="top:535px">14</div>
<div class="cell l" style="top:535px;left:33px;width:229px">Cote d&#39;Ivoire</div>
<div class="cell l" style="top:535px;left:263px;width:131px">Africa</div>
<div class="cell r" style="top:535px;left:395px;width:80px">2007</div>
<div class="cell r" style="top:535px;left:476px;width:101px">48.328</div>
<div class="cell l" style="top:535px;left:578px;width:250px">Below Continent Average</div>
<div class="cell r" style="top:535px;left:829px;width:118px">18013409</div>
<div class="cell r" style="top:535px;left:948px;width:138px">1544.750112</div>
<div class="cell" style="top:535px;left:1087px;width:20px"></div>
<div class="rh" style="top:561px">15</div>
<div class="cell l" style="top:561px;left:33px;width:229px">Djibouti</div>
<div class="cell l" style="top:561px;left:263px;width:131px">Africa</div>
<div class="cell r" style="top:561px;left:395px;width:80px">2007</div>
<div class="cell r" style="top:561px;left:476px;width:101px">54.791</div>
<div class="cell l" style="top:561px;left:578px;width:250px">Above Continent Average</div>
<div class="cell r" style="top:561px;left:829px;width:118px">496374</div>
<div class="cell r" style="top:561px;left:948px;width:138px">2082.481567</div>
<div class="cell" style="top:561px;left:1087px;width:20px"></div>
<div class="rh" style="top:587px">16</div>
<div class="cell l" style="top:587px;left:33px;width:229px">Egypt</div>
<div class="cell l" style="top:587px;left:263px;width:131px">Africa</div>
<div class="cell r" style="top:587px;left:395px;width:80px">2007</div>
<div class="cell r" style="top:587px;left:476px;width:101px">71.338</div>
<div class="cell l" style="top:587px;left:578px;width:250px">Above Continent Average</div>
<div class="cell r" style="top:587px;left:829px;width:118px">80264543</div>
<div class="cell r" style="top:587px;left:948px;width:138px">5581.180998</div>
<div class="cell" style="top:587px;left:1087px;width:20px"></div>
<div class="rh" style="top:613px">17</div>
<div class="cell l" style="top:613px;left:33px;width:229px">Equatorial Guinea</div>
<div class="cell l" style="top:613px;left:263px;width:131px">Africa</div>
<div class="cell r" style="top:613px;left:395px;width:80px">2007</div>
<div class="cell r" style="top:613px;left:476px;width:101px">51.579</div>
<div class="cell l" style="top:613px;left:578px;width:250px">Below Continent Average</div>
<div class="cell r" style="top:613px;left:829px;width:118px">551201</div>
<div class="cell r" style="top:613px;left:948px;width:138px">12154.08975</div>
<div class="cell" style="top:613px;left:1087px;width:20px"></div>
<div class="rh" style="top:639px">18</div>
<div class="cell l" style="top:639px;left:33px;width:229px">Eritrea</div>
<div class="cell l" style="top:639px;left:263px;width:131px">Africa</div>
<div class="cell r" style="top:639px;left:395px;width:80px">2007</div>
<div class="cell r" style="top:639px;left:476px;width:101px">58.04</div>
<div class="cell l" style="top:639px;left:578px;width:250px">Above Continent Average</div>
<div class="cell r" style="top:639px;left:829px;width:118px">4906585</div>
<div class="cell r" style="top:639px;left:948px;width:138px">641.3695236</div>
<div class="cell" style="top:639px;left:1087px;width:20px"></div>
<div class="rh" style="top:665px">19</div>
<div class="cell l" style="top:665px;left:33px;width:229px">Ethiopia</div>
<div class="cell l" style="top:665px;left:263px;width:131px">Africa</div>
<div class="cell r" style="top:665px;left:395px;width:80px">2007</div>
<div class="cell r" style="top:665px;left:476px;width:101px">52.947</div>
<div class="cell l" style="top:665px;left:578px;width:250px">Below Continent Average</div>
<div class="cell r" style="top:665px;left:829px;width:118px">76511887</div>
<div class="cell r" style="top:665px;left:948px;width:138px">690.8055759</div>
<div class="cell" style="top:665px;left:1087px;width:20px"></div>
<div class="rh" style="top:691px">20</div>
<div class="cell l" style="top:691px;left:33px;width:229px">Gabon</div>
<div class="cell l" style="top:691px;left:263px;width:131px">Africa</div>
<div class="cell r" style="top:691px;left:395px;width:80px">2007</div>
<div class="cell r" style="top:691px;left:476px;width:101px">56.735</div>
<div class="cell l" style="top:691px;left:578px;width:250px">Above Continent Average</div>
<div class="cell r" style="top:691px;left:829px;width:118px">1454867</div>
<div class="cell r" style="top:691px;left:948px;width:138px">13206.48452</div>
<div class="cell" style="top:691px;left:1087px;width:20px"></div>
<div class="rh" style="top:717px">21</div>
<div class="cell l" style="top:717px;left:33px;width:229px">Gambia</div>
<div class="cell l" style="top:717px;left:263px;width:131px">Africa</div>
<div class="cell r" style="top:717px;left:395px;width:80px">2007</div>
<div class="cell r" style="top:717px;left:476px;width:101px">59.448</div>
<div class="cell l" style="top:717px;left:578px;width:250px">Above Continent Average</div>
<div class="cell r" style="top:717px;left:829px;width:118px">1688359</div>
<div class="cell r" style="top:717px;left:948px;width:138px">752.7497265</div>
<div class="cell" style="top:717px;left:1087px;width:20px"></div>
<div class="rh" style="top:743px">22</div>
<div class="cell l" style="top:743px;left:33px;width:229px">Ghana</div>
<div class="cell l" style="top:743px;left:263px;width:131px">Africa</div>
<div class="cell r" style="top:743px;left:395px;width:80px">2007</div>
<div class="cell r" style="top:743px;left:476px;width:101px">60.022</div>
<div class="cell l" style="top:743px;left:578px;width:250px">Above Continent Average</div>
<div class="cell r" style="top:743px;left:829px;width:118px">22873338</div>
<div class="cell r" style="top:743px;left:948px;width:138px">1327.60891</div>
<div class="cell" style="top:743px;left:1087px;width:20px"></div>
<div class="rh" style="top:769px">23</div>
<div class="cell l" style="top:769px;left:33px;width:229px">Guinea</div>
<div class="cell l" style="top:769px;left:263px;width:131px">Africa</div>
<div class="cell r" style="top:769px;left:395px;width:80px">2007</div>
<div class="cell r" style="top:769px;left:476px;width:101px">56.007</div>
<div class="cell l" style="top:769px;left:578px;width:250px">Above Continent Average</div>
<div class="cell r" style="top:769px;left:829px;width:118px">9947814</div>
<div class="cell r" style="top:769px;left:948px;width:138px">942.6542111</div>
<div class="cell" style="top:769px;left:1087px;width:20px"></div>
<div class="rh" style="top:795px">24</div>
<div class="cell l" style="top:795px;left:33px;width:229px">Guinea-Bissau</div>
<div class="cell l" style="top:795px;left:263px;width:131px">Africa</div>
<div class="cell r" style="top:795px;left:395px;width:80px">2007</div>
<div class="cell r" style="top:795px;left:476px;width:101px">46.388</div>
<div class="cell l" style="top:795px;left:578px;width:250px">Below Continent Average</div>
<div class="cell r" style="top:795px;left:829px;width:118px">1472041</div>
<div class="cell r" style="top:795px;left:948px;width:138px">579.231743</div>
<div class="cell" style="top:795px;left:1087px;width:20px"></div>
<div class="rh" style="top:821px">25</div>
<div class="cell l" style="top:821px;left:33px;width:229px">Kenya</div>
<div class="cell l" style="top:821px;left:263px;width:131px">Africa</div>
<div class="cell r" style="top:821px;left:395px;width:80px">2007</div>
<div class="cell r" style="top:821px;left:476px;width:101px">54.11</div>
<div class="cell l" style="top:821px;left:578px;width:250px">Below Continent Average</div>
<div class="cell r" style="top:821px;left:829px;width:118px">35610177</div>
<div class="cell r" style="top:821px;left:948px;width:138px">1463.249282</div>
<div class="cell" style="top:821px;left:1087px;width:20px"></div>
<div class="rh" style="top:847px">26</div>
<div class="cell l" style="top:847px;left:33px;width:229px">Lesotho</div>
<div class="cell l" style="top:847px;left:263px;width:131px">Africa</div>
<div class="cell r" style="top:847px;left:395px;width:80px">2007</div>
<div class="cell r" style="top:847px;left:476px;width:101px">42.592</div>
<div class="cell l" style="top:847px;left:578px;width:250px">Below Continent Average</div>
<div class="cell r" style="top:847px;left:829px;width:118px">2012649</div>
<div class="cell r" style="top:847px;left:948px;width:138px">1569.331442</div>
<div class="cell" style="top:847px;left:1087px;width:20px"></div>
<div class="rh" style="top:873px">27</div>
<div class="cell l" style="top:873px;left:33px;width:229px">Liberia</div>
<div class="cell l" style="top:873px;left:263px;width:131px">Africa</div>
<div class="cell r" style="top:873px;left:395px;width:80px">2007</div>
<div class="cell r" style="top:873px;left:476px;width:101px">45.678</div>
<div class="cell l" style="top:873px;left:578px;width:250px">Below Continent Average</div>
<div class="cell r" style="top:873px;left:829px;width:118px">3193942</div>
<div class="cell r" style="top:873px;left:948px;width:138px">414.5073415</div>
<div class="cell" style="top:873px;left:1087px;width:20px"></div>
<div class="rh" style="top:899px">28</div>
<div class="cell l" style="top:899px;left:33px;width:229px">Libya</div>
<div class="cell l" style="top:899px;left:263px;width:131px">Africa</div>
<div class="cell r" style="top:899px;left:395px;width:80px">2007</div>
<div class="cell r" style="top:899px;left:476px;width:101px">73.952</div>
<div class="cell l" style="top:899px;left:578px;width:250px">Above Continent Average</div>
<div class="cell r" style="top:899px;left:829px;width:118px">6036914</div>
<div class="cell r" style="top:899px;left:948px;width:138px">12057.49928</div>
<div class="cell" style="top:899px;left:1087px;width:20px"></div>
<div class="rh" style="top:925px">29</div>
<div class="cell l" style="top:925px;left:33px;width:229px">Madagascar</div>
<div class="cell l" style="top:925px;left:263px;width:131px">Africa</div>
<div class="cell r" style="top:925px;left:395px;width:80px">2007</div>
<div class="cell r" style="top:925px;left:476px;width:101px">59.443</div>
<div class="cell l" style="top:925px;left:578px;width:250px">Above Continent Average</div>
<div class="cell r" style="top:925px;left:829px;width:118px">19167654</div>
<div class="cell r" style="top:925px;left:948px;width:138px">1044.770126</div>
<div class="cell" style="top:925px;left:1087px;width:20px"></div>
<div class="rh" style="top:951px">30</div>
<div class="cell l" style="top:951px;left:33px;width:229px">Malawi</div>
<div class="cell l" style="top:951px;left:263px;width:131px">Africa</div>
<div class="cell r" style="top:951px;left:395px;width:80px">2007</div>
<div class="cell r" style="top:951px;left:476px;width:101px">48.303</div>
<div class="cell l" style="top:951px;left:578px;width:250px">Below Continent Average</div>
<div class="cell r" style="top:951px;left:829px;width:118px">13327079</div>
<div class="cell r" style="top:951px;left:948px;width:138px">759.3499101</div>
<div class="cell" style="top:951px;left:1087px;width:20px"></div>
<div class="rh" style="top:977px">31</div>
<div class="cell l" style="top:977px;left:33px;width:229px">Mali</div>
<div class="cell l" style="top:977px;left:263px;width:131px">Africa</div>
<div class="cell r" style="top:977px;left:395px;width:80px">2007</div>
<div class="cell r" style="top:977px;left:476px;width:101px">54.467</div>
<div class="cell l" style="top:977px;left:578px;width:250px">Above Continent Average</div>
<div class="cell r" style="top:977px;left:829px;width:118px">12031795</div>
<div class="cell r" style="top:977px;left:948px;width:138px">1042.581557</div>
<div class="cell" style="top:977px;left:1087px;width:20px"></div>
<div class="rh" style="top:1003px">32</div>
<div class="cell l" style="top:1003px;left:33px;width:229px">Mauritania</div>
<div class="cell l" style="top:1003px;left:263px;width:131px">Africa</div>
<div class="cell r" style="top:1003px;left:395px;width:80px">2007</div>
<div class="cell r" style="top:1003px;left:476px;width:101px">64.164</div>
<div class="cell l" style="top:1003px;left:578px;width:250px">Above Continent Average</div>
<div class="cell r" style="top:1003px;left:829px;width:118px">3270065</div>
<div class="cell r" style="top:1003px;left:948px;width:138px">1803.151496</div>
<div class="cell" style="top:1003px;left:1087px;width:20px"></div>
<div class="rh" style="top:1029px">33</div>
<div class="cell l" style="top:1029px;left:33px;width:229px">Mauritius</div>
<div class="cell l" style="top:1029px;left:263px;width:131px">Africa</div>
<div class="cell r" style="top:1029px;left:395px;width:80px">2007</div>
<div class="cell r" style="top:1029px;left:476px;width:101px">72.801</div>
<div class="cell l" style="top:1029px;left:578px;width:250px">Above Continent Average</div>
<div class="cell r" style="top:1029px;left:829px;width:118px">1250882</div>
<div class="cell r" style="top:1029px;left:948px;width:138px">10956.99112</div>
<div class="cell" style="top:1029px;left:1087px;width:20px"></div>
<div class="rh" style="top:1055px">34</div>
<div class="cell l" style="top:1055px;left:33px;width:229px">Morocco</div>
<div class="cell l" style="top:1055px;left:263px;width:131px">Africa</div>
<div class="cell r" style="top:1055px;left:395px;width:80px">2007</div>
<div class="cell r" style="top:1055px;left:476px;width:101px">71.164</div>
<div class="cell l" style="top:1055px;left:578px;width:250px">Above Continent Average</div>
<div class="cell r" style="top:1055px;left:829px;width:118px">33757175</div>
<div class="cell r" style="top:1055px;left:948px;width:138px">3820.17523</div>
<div class="cell" style="top:1055px;left:1087px;width:20px"></div>
<div class="rh" style="top:1081px">35</div>
<div class="cell l" style="top:1081px;left:33px;width:229px">Mozambique</div>
<div class="cell l" style="top:1081px;left:263px;width:131px">Africa</div>
<div class="cell r" style="top:1081px;left:395px;width:80px">2007</div>
<div class="cell r" style="top:1081px;left:476px;width:101px">42.082</div>
<div class="cell l" style="top:1081px;left:578px;width:250px">Below Continent Average</div>
<div class="cell r" style="top:1081px;left:829px;width:118px">19951656</div>
<div class="cell r" style="top:1081px;left:948px;width:138px">823.6856205</div>
<div class="cell" style="top:1081px;left:1087px;width:20px"></div>
<div class="hl" style="top:222px"></div>
<div class="hl" style="top:248px"></div>
<div class="hl" style="top:274px"></div>
<div class="hl" style="top:300px"></div>
<div class="hl" style="top:326px"></div>
<div class="hl" style="top:352px"></div>
<div class="hl" style="top:378px"></div>
<div class="hl" style="top:404px"></div>
<div class="hl" style="top:430px"></div>
<div class="hl" style="top:456px"></div>
<div class="hl" style="top:482px"></div>
<div class="hl" style="top:508px"></div>
<div class="hl" style="top:534px"></div>
<div class="hl" style="top:560px"></div>
<div class="hl" style="top:586px"></div>
<div class="hl" style="top:612px"></div>
<div class="hl" style="top:638px"></div>
<div class="hl" style="top:664px"></div>
<div class="hl" style="top:690px"></div>
<div class="hl" style="top:716px"></div>
<div class="hl" style="top:742px"></div>
<div class="hl" style="top:768px"></div>
<div class="hl" style="top:794px"></div>
<div class="hl" style="top:820px"></div>
<div class="hl" style="top:846px"></div>
<div class="hl" style="top:872px"></div>
<div class="hl" style="top:898px"></div>
<div class="hl" style="top:924px"></div>
<div class="hl" style="top:950px"></div>
<div class="hl" style="top:976px"></div>
<div class="hl" style="top:1002px"></div>
<div class="hl" style="top:1028px"></div>
<div class="hl" style="top:1054px"></div>
<div class="hl" style="top:1080px"></div>
<div class="hl" style="top:1106px"></div>
<div class="vl" style="left:262px"></div>
<div class="vl" style="left:394px"></div>
<div class="vl" style="left:475px"></div>
<div class="vl" style="left:577px"></div>
<div class="vl" style="left:828px"></div>
<div class="vl" style="left:947px"></div>
<div class="vl" style="left:1086px"></div>
<div class="vl" style="left:1200px"></div>
<div id="selbox"></div><div id="handle"></div>
<div class="abs" style="left:32px;top:176px;width:1069px;height:1px;background:#6b6f74"></div>
<div class="abs" style="left:0;top:196px;width:33px;height:1px;background:#6b6f74"></div>
<div class="abs" style="left:0;top:196px;width:1px;height:891px;background:#6b6f74"></div>
<div class="abs" style="left:32px;top:176px;width:1px;height:911px;background:#5d6166"></div>
<div class="rhl" style="top:222px"></div>
<div class="rhl" style="top:248px"></div>
<div class="rhl" style="top:274px"></div>
<div class="rhl" style="top:300px"></div>
<div class="rhl" style="top:326px"></div>
<div class="rhl" style="top:352px"></div>
<div class="rhl" style="top:378px"></div>
<div class="rhl" style="top:404px"></div>
<div class="rhl" style="top:430px"></div>
<div class="rhl" style="top:456px"></div>
<div class="rhl" style="top:482px"></div>
<div class="rhl" style="top:508px"></div>
<div class="rhl" style="top:534px"></div>
<div class="rhl" style="top:560px"></div>
<div class="rhl" style="top:586px"></div>
<div class="rhl" style="top:612px"></div>
<div class="rhl" style="top:638px"></div>
<div class="rhl" style="top:664px"></div>
<div class="rhl" style="top:690px"></div>
<div class="rhl" style="top:716px"></div>
<div class="rhl" style="top:742px"></div>
<div class="rhl" style="top:768px"></div>
<div class="rhl" style="top:794px"></div>
<div class="rhl" style="top:820px"></div>
<div class="rhl" style="top:846px"></div>
<div class="rhl" style="top:872px"></div>
<div class="rhl" style="top:898px"></div>
<div class="rhl" style="top:924px"></div>
<div class="rhl" style="top:950px"></div>
<div class="rhl" style="top:976px"></div>
<div class="rhl" style="top:1002px"></div>
<div class="rhl" style="top:1028px"></div>
<div class="rhl" style="top:1054px"></div>
<div class="rhl" style="top:1080px"></div>
</div>
<div id="bottom"></div>
<div class="abs" style="left:0;top:1087px;width:1101px;height:1px;background:#52565b"></div>
<div class="abs" style="left:3px;top:1094px;width:860px;height:8px;background:#474b51;border-radius:4px;border:1px solid #4f5359"></div>
<svg class="abs" style="left:13px;top:1111px" width="11" height="17" viewBox="0 0 11 17"><rect x="1" y="1" width="1.5" height="15" fill="#6b6f73"/><path d="M9 1.5V16L3 9Z" fill="#6b6f73"/><path d="M9 1.5V16" stroke="#000" stroke-width="1.2"/></svg>
<svg class="abs" style="left:36px;top:1112px" width="10" height="16" viewBox="0 0 10 16"><path d="M8.5 0.5V15L1 8Z" fill="#6b6f73"/><path d="M8.5 0.5V15" stroke="#000" stroke-width="1.2"/></svg>
<svg class="abs" style="left:58px;top:1112px" width="10" height="16" viewBox="0 0 10 16"><path d="M1 0.5V15L8.5 8Z" fill="#6b6f73"/><path d="M8.5 8L1.5 15" stroke="#000" stroke-width="1.2"/></svg>
<svg class="abs" style="left:80px;top:1112px" width="11" height="16" viewBox="0 0 11 16"><path d="M1 1V15L7.5 8Z" fill="#6b6f73"/><path d="M7.5 8L1.5 15" stroke="#000" stroke-width="1"/><rect x="8.5" y="1" width="1.5" height="14.5" fill="#000"/></svg>
<svg class="abs" style="left:107px;top:1111px" width="17" height="17" viewBox="0 0 17 17"><path d="M8.5 1V16M1 8.5H16" stroke="#f0f0f0" stroke-width="3"/></svg>
<div class="abs" style="left:133px;top:1108px;width:57px;height:23px;background:#1b1d20"></div>
<div class="abs" style="left:133px;top:1128px;width:57px;height:3px;background:#e8e8e8"></div>
<div class="abs" style="left:145px;top:1110px;font-size:13.2px;font-weight:bold;color:#f0f0f0;line-height:18px">good</div>
<div class="abs" style="left:202px;top:1110px;font-size:13px;color:#d8d8d8;line-height:18px">bad</div>
<div class="abs" style="left:235px;top:1114px;width:1px;height:12px;background:#6b6f73"></div>
<div class="abs" style="left:249px;top:1110px;font-size:13px;color:#d8d8d8;line-height:18px">means</div>
<div class="abs" style="left:299px;top:1114px;width:1px;height:12px;background:#6b6f73"></div>
<div class="abs" style="left:0;top:1131px;width:1101px;height:1px;background:#55595e"></div>

</body></html>
